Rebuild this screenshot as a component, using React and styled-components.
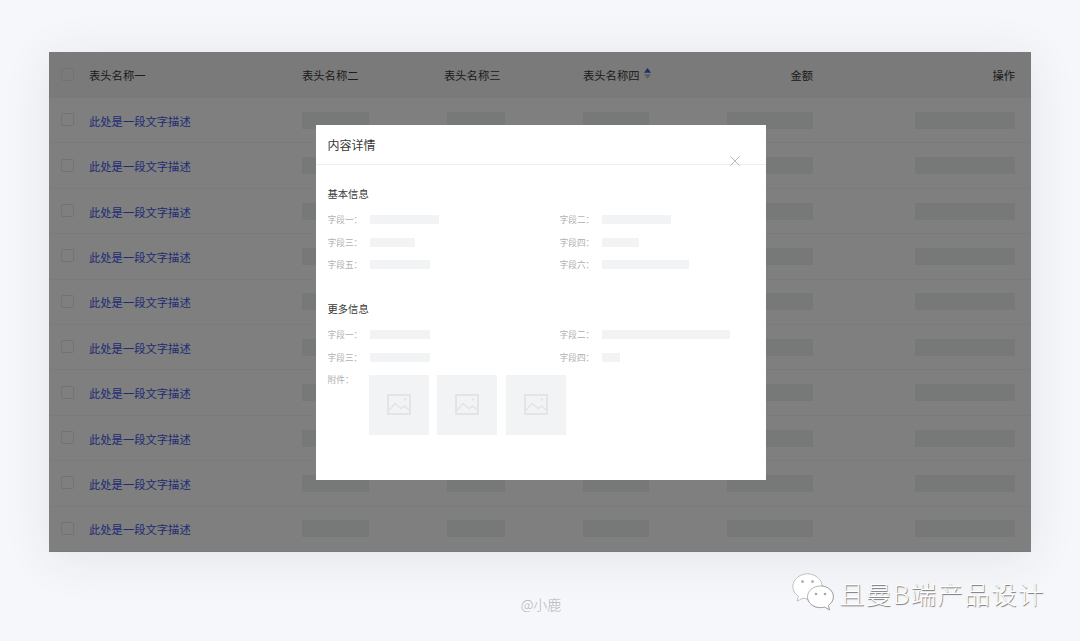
import React from "react";
import styled, { createGlobalStyle } from "styled-components";

const Global = createGlobalStyle`
  * {
    box-sizing: border-box;
  }
  html, body {
    margin: 0;
    padding: 0;
    background: #f6f7fa;
  }
  body {
    font-family: "Noto Sans CJK SC", "Liberation Sans", sans-serif;
  }
`;

const Page = styled.div`
  position: relative;
  width: 1080px;
  height: 641px;
  padding: 52px 49px 0;
  overflow: hidden;
`;

const Table = styled.div`
  position: relative;
  display: flex;
  flex-direction: column;
  width: 982px;
  height: 500px;
  background: #fff;
  box-shadow: 0 6px 46px rgba(30, 45, 90, 0.09);
`;

const gridColumns = "28px 213px 142px 139px 100px 130px 202px";

const HeaderRow = styled.div`
  display: grid;
  grid-template-columns: ${gridColumns};
  align-items: center;
  height: 46px;
  flex: none;
  padding: 0 16px 0 12px;
  background: #f5f5f5;
  font-size: 11.3px;
  color: #383838;
`;

const Row = styled.div`
  display: grid;
  grid-template-columns: ${gridColumns};
  align-items: center;
  flex: 1;
  padding: 0 16px 0 12px;
  border-bottom: 1px solid #f7f7f7;
  &:last-of-type {
    border-bottom: none;
  }
`;

const Check = styled.span`
  display: block;
  width: 13px;
  height: 13px;
  border: 1px solid #e6e6e6;
  border-radius: 2px;
  margin-top: ${(p) => (p.$head ? "-2px" : "-1px")};
`;

const HeadCell = styled.div`
  display: flex;
  align-items: center;
  gap: 4px;
  justify-content: ${(p) => (p.$right ? "flex-end" : "flex-start")};
`;

const Link = styled.span`
  padding-top: 1px;
  font-size: 11.3px;
  color: #3f55e6;
`;

const Bar = styled.div`
  justify-self: ${(p) => (p.$right ? "end" : "start")};
  width: ${(p) => p.$w}px;
  height: 17px;
  margin-left: ${(p) => p.$ml || 0}px;
  background: #eff1f0;
`;

const SortIcon = styled.svg`
  width: 7px;
  height: 11px;
  margin-top: -3px;
`;

const Overlay = styled.div`
  position: absolute;
  inset: 0;
  display: flex;
  align-items: center;
  justify-content: center;
  padding: 1px 0 0 1px;
  background: rgba(0, 0, 0, 0.5);
`;

const Modal = styled.div`
  position: relative;
  width: 450px;
  height: 355px;
  background: #fff;
`;

const ModalHead = styled.div`
  height: 40px;
  padding-left: 12px;
  border-bottom: 1px solid #eeeeee;
  font-size: 12px;
  line-height: 39px;
  color: #383838;
`;

const Close = styled.svg`
  position: absolute;
  top: 31px;
  right: 26px;
  width: 10px;
  height: 10px;
`;

const ModalBody = styled.div`
  padding: 21px 12px 0;
`;

const Section = styled.section`
  margin-bottom: ${(p) => p.$mb || 0}px;
`;

const SectionTitle = styled.div`
  font-size: 10.3px;
  line-height: 16px;
  color: #383838;
  margin-bottom: 13px;
`;

const Fields = styled.div`
  display: grid;
  grid-template-columns: 232px 1fr;
  row-gap: 13.5px;
`;

const Field = styled.div`
  display: flex;
  align-items: center;
  height: 9px;
`;

const Label = styled.span`
  flex: none;
  width: 42px;
  font-size: 8.7px;
  line-height: 9px;
  color: #b0b0b0;
`;

const Placeholder = styled.div`
  width: ${(p) => p.$w}px;
  height: 9px;
  background: #f2f3f5;
`;

const Attach = styled.div`
  display: flex;
  margin-top: 13.5px;
`;

const AttachLabel = styled(Label)`
  width: 41px;
  height: 9px;
`;

const Thumbs = styled.div`
  display: flex;
  gap: 8.7px;
  margin-top: -0.5px;
`;

const Thumb = styled.div`
  display: flex;
  align-items: center;
  justify-content: center;
  width: 60px;
  height: 60px;
  background: #f2f3f5;
`;

const Credit = styled.div`
  position: absolute;
  left: 0;
  right: 0;
  top: 595px;
  padding-left: 2px;
  text-align: center;
  font-size: 14px;
  font-weight: 300;
  line-height: 18px;
  color: #b4b5b8;
`;

const Watermark = styled.div`
  position: absolute;
  top: 573px;
  left: 792px;
  display: flex;
  align-items: center;
  gap: 5px;
  font-size: 25.5px;
  font-weight: 300;
  letter-spacing: 1.4px;
  line-height: 40px;
  color: #fff;
  text-shadow: 0.7px 0.7px 0.8px rgba(0, 0, 0, 0.5);
`;

const WeChatMark = styled.svg`
  flex: none;
  width: 42px;
  height: 38px;
  margin-top: -2px;
  filter: drop-shadow(0.5px 0.5px 0.5px rgba(0, 0, 0, 0.45));
`;

const names = ["表头名称二", "表头名称三"];
const rows = Array.from({ length: 10 }, (_, i) => i);

function ImageIcon() {
  return (
    <svg width="24" height="21" viewBox="0 0 24 21" fill="none">
      <rect x="1" y="1" width="22" height="19" stroke="#e3e4e6" strokeWidth="2" />
      <path d="M2 16.5 L8 9.5 L14 14.5 L17.5 12 L22 16" stroke="#e3e4e6" strokeWidth="1.6" />
      <circle cx="18" cy="5.5" r="1.3" fill="#e3e4e6" />
    </svg>
  );
}

function WeChat() {
  return (
    <WeChatMark viewBox="0 0 42 38">
      <path
        d="M15.5 1 C7.5 1 1 6.6 1 13.5 C1 17.6 3.2 21 6.6 23.2 L5.2 28 L11 25 C12.5 25.5 14 25.8 15.5 25.8 C23.5 25.8 30 20.3 30 13.5 C30 6.6 23.5 1 15.5 1 Z"
        fill="#fff"
        stroke="#c9c9c9"
        strokeWidth="0.6"
      />
      <path
        d="M28.5 13 C21.5 13 15.5 17.6 15.5 23.8 C15.5 30 21.5 34.6 28.5 34.6 C30 34.6 31.3 34.4 32.6 34 L37.5 36.8 L36.3 32.5 C39.3 30.4 41.3 27.4 41.3 23.8 C41.3 17.6 35.5 13 28.5 13 Z"
        fill="#fff"
        stroke="#9f9f9f"
        strokeWidth="0.8"
      />
      <circle cx="10.5" cy="8.5" r="1.5" fill="#b5b5b5" />
      <circle cx="20.5" cy="8.5" r="1.5" fill="#b5b5b5" />
      <circle cx="24" cy="21" r="1.3" fill="#a8a8a8" />
      <circle cx="33" cy="21" r="1.3" fill="#a8a8a8" />
    </WeChatMark>
  );
}

function App() {
  return (
    <Page>
      <Global />
      <Table>
        <HeaderRow>
          <Check $head />
          <HeadCell>表头名称一</HeadCell>
          {names.map((n) => (
            <HeadCell key={n}>{n}</HeadCell>
          ))}
          <HeadCell>
            表头名称四
            <SortIcon viewBox="0 0 7 11">
              <path d="M3.5 0 L7 4.8 H0 Z" fill="#3f55e6" />
              <path d="M3.5 11 L7 6.2 H0 Z" fill="#bdbdbd" />
            </SortIcon>
          </HeadCell>
          <HeadCell $right>金额</HeadCell>
          <HeadCell $right>操作</HeadCell>
        </HeaderRow>
        {rows.map((r) => (
          <Row key={r}>
            <Check />
            <Link>此处是一段文字描述</Link>
            <Bar $w={67} />
            <Bar $w={58} $ml={3} />
            <Bar $w={66} />
            <Bar $w={86} $right />
            <Bar $w={100} $right />
          </Row>
        ))}
        <Overlay>
          <Modal>
            <ModalHead>内容详情</ModalHead>
            <Close viewBox="0 0 10 10">
              <path d="M0.5 0.5 L9.5 9.5 M9.5 0.5 L0.5 9.5" stroke="#b9b9b9" strokeWidth="1" />
            </Close>
            <ModalBody>
              <Section $mb={32}>
                <SectionTitle>基本信息</SectionTitle>
                <Fields>
                  <Field><Label>字段一：</Label><Placeholder $w={69} /></Field>
                  <Field><Label>字段二：</Label><Placeholder $w={69} /></Field>
                  <Field><Label>字段三：</Label><Placeholder $w={45} /></Field>
                  <Field><Label>字段四：</Label><Placeholder $w={37} /></Field>
                  <Field><Label>字段五：</Label><Placeholder $w={60} /></Field>
                  <Field><Label>字段六：</Label><Placeholder $w={87} /></Field>
                </Fields>
              </Section>
              <Section>
                <SectionTitle>更多信息</SectionTitle>
                <Fields>
                  <Field><Label>字段一：</Label><Placeholder $w={60} /></Field>
                  <Field><Label>字段二：</Label><Placeholder $w={128} /></Field>
                  <Field><Label>字段三：</Label><Placeholder $w={60} /></Field>
                  <Field><Label>字段四：</Label><Placeholder $w={18} /></Field>
                </Fields>
                <Attach>
                  <AttachLabel>附件：</AttachLabel>
                  <Thumbs>
                    {[0, 1, 2].map((t) => (
                      <Thumb key={t}>
                        <ImageIcon />
                      </Thumb>
                    ))}
                  </Thumbs>
                </Attach>
              </Section>
            </ModalBody>
          </Modal>
        </Overlay>
      </Table>
      <Credit>@小鹿</Credit>
      <Watermark>
        <WeChat />
        <span>且曼B端产品设计</span>
      </Watermark>
    </Page>
  );
}

export default App;
